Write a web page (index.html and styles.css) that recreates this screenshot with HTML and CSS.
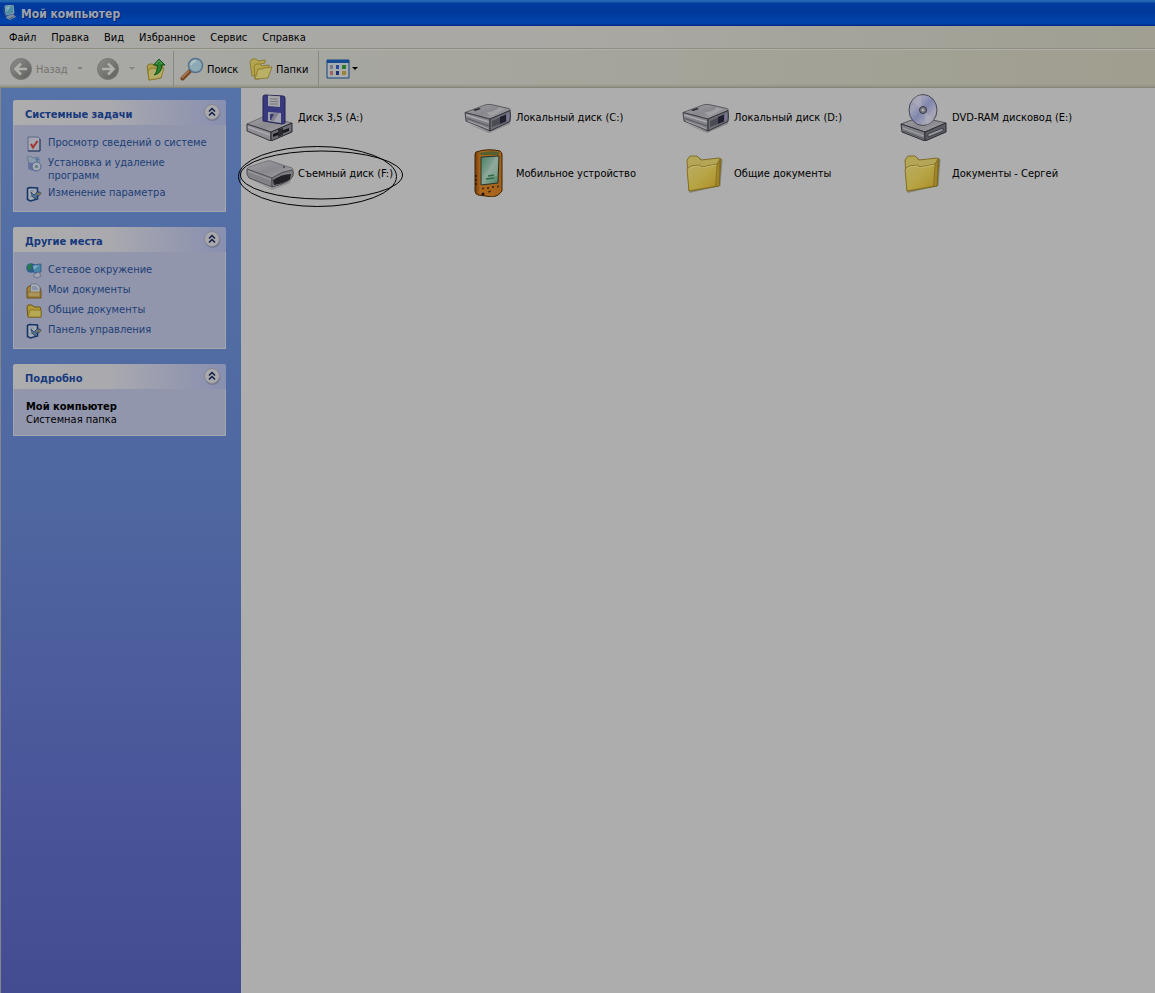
FILE: index.html
```html
<!DOCTYPE html>
<html lang="ru">
<head>
<meta charset="utf-8">
<title>Мой компьютер</title>
<link rel="stylesheet" href="styles.css">
</head>
<body>
<svg class="defs" aria-hidden="true">
  <defs>
    <linearGradient id="gFolder" x1="0" y1="0" x2="1" y2="1"><stop offset="0" stop-color="#b8ad66"/><stop offset=".5" stop-color="#b7a547"/><stop offset="1" stop-color="#ab8a20"/></linearGradient>
    <linearGradient id="gTop" x1="0" y1="0" x2="1" y2="1"><stop offset="0" stop-color="#a0a0a4"/><stop offset=".5" stop-color="#88888e"/><stop offset="1" stop-color="#a5a5a8"/></linearGradient>
    <linearGradient id="gScreen" x1="0" y1="0" x2="1" y2="1"><stop offset="0" stop-color="#4a7f64"/><stop offset=".5" stop-color="#8aa496"/><stop offset="1" stop-color="#4a8060"/></linearGradient>
    <linearGradient id="gPda" x1="0" y1="0" x2="1" y2="0"><stop offset="0" stop-color="#6f3a0c"/><stop offset=".2" stop-color="#b0691d"/><stop offset="1" stop-color="#a4621a"/></linearGradient>
    <linearGradient id="gDisc" x1="0" y1="0" x2="1" y2="1"><stop offset="0" stop-color="#9292a8"/><stop offset=".3" stop-color="#a0a0b8"/><stop offset=".5" stop-color="#8086ae"/><stop offset=".75" stop-color="#a6a6b6"/><stop offset="1" stop-color="#87899c"/></linearGradient>
    <linearGradient id="gBall" x1="0" y1="0" x2="1" y2="1"><stop offset="0" stop-color="#8d8d8a"/><stop offset="1" stop-color="#5f5f5d"/></linearGradient>
    <symbol id="hdd" viewBox="0 0 48 48">
      <path d="M4 31l21 9 21-9v-3L25 38z" fill="#77777a" opacity=".6"/>
      <path d="M1 19.500L21 12q3-1 6-.5l18 4q2 1 1 2L26 26z" fill="url(#gTop)" stroke="#4b4b50" stroke-width=".8"/>
      <path d="M1 19.500L26 26v12L2 28z" fill="#818187" stroke="#3b3b41" stroke-width=".9"/>
      <path d="M2 22l23 7" stroke="#aaaab0" stroke-width="1.400"/><path d="M3 25.500l22 7.500" stroke="#55555d"/>
      <path d="M4 28l20 7.500" stroke="#a0a0a6"/>
      <path d="M26 26l20-8.500q1 5 0 11L26 38z" fill="#6c6c75" stroke="#2b2b32" stroke-width=".9"/>
      <path d="M28 28l8-3.500v6.500l-8 3z" fill="#4b4b54"/><path d="M36 24l6-2.500v7L36 31z" fill="#1f1f30"/><path d="M43 21l2-1v7l-2 1z" fill="#77779a"/>
      <path d="M9 17l6-2 2 1-6 2z" fill="#28282d"/>
      <path d="M22 19q8 1 13-5l6 2-14 7z" fill="#adadb1" opacity=".6"/>
    </symbol>
    <symbol id="folder" viewBox="0 0 48 48">
      <path d="M7 12l2-3 8-1 3 3 19-2 1.500 2-2 26-31 7z" fill="#6f6b55" opacity=".6"/>
      <path d="M5 11l3-4h7l4 4 18-2 2 1-2 27-30 5z" fill="#b4a657" stroke="#756015" stroke-width=".8"/>
      <path d="M5 20l4-3 8-1 3 2 15-3 3-4-3 26L7 42z" fill="url(#gFolder)" stroke="#7d6819" stroke-width=".8"/>
      <path d="M6.500 21l3-3 7-1 3 2 15-3" fill="none" stroke="#c2b973"/>
      <path d="M35 15l3-5-1 27-3.500.5z" fill="#a08529" stroke="#6e5914" stroke-width=".5"/>
    </symbol>
    <symbol id="chev" viewBox="0 0 18 18">
      <circle cx="9.500" cy="10" r="7.800" fill="#6d7085"/>
      <circle cx="9" cy="9" r="7.500" fill="#a8a8ad" stroke="#888894"/>
      <path d="M6 8.500l3-3 3 3M6 12.500l3-3 3 3" fill="none" stroke="#101c42" stroke-width="1.500"/>
    </symbol>
    <symbol id="panelIcon" viewBox="0 0 16 16">
      <path d="M1.500 2.500l2-1 8 .5v11l-7 2-3-1.500z" fill="#a2a9b2" stroke="#173467" stroke-width="1.600"/>
      <path d="M4 5h4M4 11l3-1" stroke="#778aa5"/>
      <path d="M5 6l3 3 3-3h3q2 2 0 3l-3 1-2 3-3-3z" fill="#55708a" stroke="#223d65" stroke-width=".7"/><path d="M11 8h4" stroke="#867644" stroke-width="1.500"/>
    </symbol>
  </defs>
</svg>
<div class="window">
  <header class="titlebar">
    <svg class="i16" viewBox="0 0 16 16"><path d="M3 1l8-1 1 8-8 2z" fill="#4a8da4" stroke="#8aa2ad"/><path d="M4 2l5-1-4 6z" fill="#7fb0bb"/><path d="M5 11l6-2 3 3-6 3-4-2z" fill="#7a8b9e"/><path d="M2 3l2 8-1 1-2-7z" fill="#2c4d80"/><path d="M7 14l5-2" stroke="#415d7c"/></svg>
    <h1>Мой компьютер</h1>
  </header>
  <nav class="menubar">
    <button>Файл</button><button>Правка</button><button>Вид</button><button>Избранное</button><button>Сервис</button><button>Справка</button>
  </nav>
  <div class="toolbar">
    <button class="tool nav-back" disabled>
      <svg class="i24" viewBox="0 0 24 24"><circle cx="12" cy="12" r="10.500" fill="url(#gBall)" stroke="#777774"/><path d="M18 12H7M12 6.500L6.500 12l5.500 5.500" fill="none" stroke="#b1b1ac" stroke-width="2.600"/></svg>
      <span>Назад</span><i class="arrow dim"></i>
    </button>
    <button class="tool nav-fwd" disabled aria-label="Вперед">
      <svg class="i24" viewBox="0 0 24 24"><circle cx="12" cy="12" r="10.500" fill="url(#gBall)" stroke="#777774"/><path d="M6 12h11M12 6.500l5.500 5.500-5.500 5.500" fill="none" stroke="#b1b1ac" stroke-width="2.600"/></svg>
      <i class="arrow dim"></i>
    </button>
    <button class="tool nav-up" aria-label="Вверх">
      <svg class="i24" viewBox="0 0 24 24"><path d="M3 9l2-2h4l2 2 8-1-2 13-12 2z" fill="#aa9c50" stroke="#806b16" stroke-width=".8"/><path d="M4 13l5-2 3 1 8-1-3 10-12 2z" fill="#b3ab68" stroke="#8b741b" stroke-width=".8"/><path d="M10 18q4-3 3-10H9.500L15 2l6 6h-3.500q1 8-7.500 10z" fill="#2b8030" stroke="#0d4c15" stroke-width=".9"/><path d="M12 7l3-3.500L18 7" fill="none" stroke="#5da05c"/></svg>
    </button>
    <span class="sep"></span>
    <button class="tool search">
      <svg class="i24" viewBox="0 0 24 24"><path d="M2.500 21.500L10 14" stroke="#74431f" stroke-width="4" stroke-linecap="round"/><path d="M2 21l7-7" stroke="#b18054" stroke-width="1.500"/><circle cx="15.500" cy="8.500" r="7" fill="#8daab5" stroke="#55728a" stroke-width="1.500"/><path d="M11 8q1-4 5-4" stroke="#b5c2c5" stroke-width="2" fill="none"/></svg>
      <span>Поиск</span>
    </button>
    <button class="tool folders">
      <svg class="i24" viewBox="0 0 24 24"><path d="M1 5l2-3h4l2 2 7-1v3l-9 2 1 10-5 1z" fill="#b3a650" stroke="#86701e" stroke-width=".8"/><path d="M5 9l2-2h4l2 2 7-1v4L10 22H6z" fill="#b5a650" stroke="#86701e" stroke-width=".8"/><path d="M6 22l3-10h4l2-1 8-1-4 11-12 1z" fill="#bab067" stroke="#87711f" stroke-width=".8"/></svg>
      <span>Папки</span>
    </button>
    <span class="sep"></span>
    <button class="tool views" aria-label="Вид">
      <svg class="i24" viewBox="0 0 24 24"><path d="M1 3h22v18H1z" fill="#a9adad" stroke="#124480"/><path d="M1 3h22v3H1z" fill="#144a90"/><path d="M4 8h3v4H4z" fill="#74788d"/><path d="M10 8h3v4h-3z" fill="#264aa0"/><path d="M16 8h4v4h-4z" fill="#287b2c"/><path d="M4 14h3v4H4z" fill="#a0665d"/><path d="M10 14h3v4h-3z" fill="#20306e"/><path d="M16 14h4v4h-4z" fill="#9a8430"/></svg>
      <i class="arrow"></i>
    </button>
  </div>
  <div class="body">
    <aside class="sidebar">
      <section class="panel">
        <div class="head"><h2>Системные задачи</h2><button class="toggle" aria-label="Свернуть"><svg viewBox="0 0 18 18"><use href="#chev"/></svg></button></div>
        <ul>
          <li><svg class="i16" viewBox="0 0 16 16"><path d="M2 1h10l2 2v12H2z" fill="#a5a6b0" stroke="#5d6888"/><path d="M14 3v12H2" fill="none" stroke="#24375d"/><path d="M5 8l2 3.500L11.500 5" fill="none" stroke="#a3312c" stroke-width="2"/></svg><a href="#">Просмотр сведений о системе</a></li>
          <li><svg class="i16" viewBox="0 0 16 16"><path d="M1 1l4-1 2 2 5-1 2 3-2 4-9 1z" fill="#8c9bab" stroke="#6e7a94"/><path d="M2 6l5 1v8l-5-2z" fill="#66749c"/><circle cx="10.500" cy="10.500" r="4.500" fill="#a1a9b5" stroke="#4f6290"/><circle cx="10.500" cy="10.500" r="1.500" fill="#567b77"/><path d="M9 2l4 1-2 3z" fill="#486c9c"/></svg><a href="#">Установка и удаление программ</a></li>
          <li><svg class="i16"><use href="#panelIcon"/></svg><a href="#">Изменение параметра</a></li>
        </ul>
      </section>
      <section class="panel">
        <div class="head"><h2>Другие места</h2><button class="toggle" aria-label="Свернуть"><svg viewBox="0 0 18 18"><use href="#chev"/></svg></button></div>
        <ul>
          <li><svg class="i16" viewBox="0 0 16 16"><circle cx="5" cy="5" r="4.800" fill="#2d5f8b"/><path d="M1 4q2-4 5-3l-1 4-2 3z" fill="#2b7a47"/><path d="M6 2l9-1v8l-7 1z" fill="#4786a8" stroke="#2d4f7d" stroke-width=".7"/><path d="M7 3l6-1-5 5z" fill="#7dabbb"/><path d="M10 10l3-1 2 4-4 2-4-2z" fill="#a1a4b0" stroke="#58617d" stroke-width=".7"/></svg><a href="#">Сетевое окружение</a></li>
          <li><svg class="i16" viewBox="0 0 16 16"><path d="M1 5l2-2h10l2 4v8H1z" fill="#a98834" stroke="#6b4d1b"/><path d="M5 1h6l3 3v6H4z" fill="#a9aeb5" stroke="#5c6882" stroke-width=".7"/><path d="M6 4h5M6 6h6" stroke="#65799c"/><path d="M2 9h12v5H2z" fill="#aa965a" stroke="#816522" stroke-width=".7"/></svg><a href="#">Мои документы</a></li>
          <li><svg class="i16" viewBox="0 0 16 16"><path d="M1 4l1-2h4l2 2h6l1 3v7H2z" fill="#b09b38" stroke="#6b5215"/><path d="M2 14l2-7h11v7z" fill="#b5a954" stroke="#806718" stroke-width=".7"/></svg><a href="#">Общие документы</a></li>
          <li><svg class="i16"><use href="#panelIcon"/></svg><a href="#">Панель управления</a></li>
        </ul>
      </section>
      <section class="panel">
        <div class="head"><h2>Подробно</h2><button class="toggle" aria-label="Свернуть"><svg viewBox="0 0 18 18"><use href="#chev"/></svg></button></div>
        <p><b>Мой компьютер</b><br>Системная папка</p>
      </section>
    </aside>
    <main class="files">
      <div class="item"><svg class="i48" viewBox="0 0 48 48"><path d="M1 31l18-8 27 7-21 9z" fill="url(#gTop)" stroke="#55555b" stroke-width=".7"/><path d="M1 31l24 8v9L1 38z" fill="#8d8d93" stroke="#37373d"/><path d="M2 34l22 8" stroke="#aaaab0" stroke-width="1.500"/><path d="M25 39l21-9v9l-21 9z" fill="#6c6c74" stroke="#28282e"/><path d="M27 41l16-6v3l-16 6z" fill="#17171d"/><path d="M32 36l5-1v7l-5 2z" fill="#28282f"/><path d="M17 4q0-2 2-2l18 1q2 0 2 2v25l-3 1-19-3z" fill="#39397f" stroke="#24244f"/><path d="M22 2.500l12 .7V14l-12-1z" fill="#a6a6a9"/><path d="M24 6h8M24 8.500h8M24 11h8" stroke="#77777d"/><path d="M22 19l13 1v10l-13-2z" fill="#a1a1ae"/><path d="M25 20h8l-5 8h-3z" fill="#818190"/><path d="M24 21h4l-3 6h-1z" fill="#393974"/></svg><span>Диск 3,5 (A:)</span></div>
      <div class="item"><svg class="i48"><use href="#hdd"/></svg><span>Локальный диск (C:)</span></div>
      <div class="item"><svg class="i48"><use href="#hdd"/></svg><span>Локальный диск (D:)</span></div>
      <div class="item"><svg class="i48" viewBox="0 0 48 48"><path d="M1 31l19-7 26 6-21 9z" fill="url(#gTop)" stroke="#55555b"/><path d="M1 31l24 8v9L2 39z" fill="#7d7d84" stroke="#303036"/><path d="M3 35l21 8" stroke="#a4a4a9"/><path d="M3 38l21 8" stroke="#505057"/><path d="M25 39l21-9v9l-21 9z" fill="#5c5c64" stroke="#28282e"/><path d="M28 41l15-6v3l-15 6z" fill="#9a9aa2" stroke="#27272e" stroke-width=".7"/><ellipse cx="23" cy="17" rx="14" ry="15.500" fill="url(#gDisc)" stroke="#484855"/><path d="M22 17L12 8q4-6 9-6zM24 18l10 8q-3 5-8 6z" fill="#b1b1bb" opacity=".5"/><circle cx="23" cy="17" r="3.500" fill="#77777f" stroke="#393943"/><circle cx="23" cy="17" r="1.300" fill="#b1b1b1"/></svg><span>DVD-RAM дисковод (E:)</span></div>
      <div class="item"><svg class="i48" viewBox="0 0 48 48"><path d="M3 29l22 10q15-3 21-11l-2 6-18 7z" fill="#77777a" opacity=".5"/><path d="M1 20q0-1 2-2l18-6q2-.5 4 0l21 7q2 1 1 3L26 30z" fill="url(#gTop)" stroke="#6a6a6e" stroke-width=".8"/><path d="M1 20l25 9v9L3 29q-3-3-2-9z" fill="#828286" stroke="#4b4b50" stroke-width=".9"/><path d="M2 22l23 9" stroke="#a0a0a4"/><path d="M26 29q10-7 20-8 2 1 1 6-4 7-21 11z" fill="#7c7c81" stroke="#444448" stroke-width=".9"/><path d="M27 31q9-6 18-6l-1 5q-5 4-16 6z" fill="#202025"/><circle cx="38" cy="18" r=".8" fill="#111"/></svg><span>Съемный диск (F:)</span>
        <svg class="rings" viewBox="0 0 166 62" aria-hidden="true"><ellipse cx="79.500" cy="30.500" rx="79" ry="30"/><ellipse cx="83.500" cy="29" rx="81" ry="24"/></svg></div>
      <div class="item"><svg class="i48" viewBox="0 0 48 48"><path d="M12 3q12-4 24-1 2 1 2 4v36q-3 5-9 6l-15-2q-3-1-3-4V6q0-2 1-3z" fill="url(#gPda)" stroke="#402506"/><path d="M15 4q10-3 20-1v3H16z" fill="#58602e"/><path d="M17 8l18-1-1 27-17 2z" fill="url(#gScreen)" stroke="#253329"/><path d="M18 28q7-6 13-20h3l-1 19z" fill="#93aca0" opacity=".6"/><path d="M22 30l8-1M24 27l6-1" stroke="#2f6b45" stroke-width="1.500"/><path d="M12 26v2M12 30v2M12 34v2" stroke="#2e1b07" stroke-width="1.600"/><path d="M18 40l2-1M23 39h2M28 38h2M33 38l2-1M24 43l3-1" stroke="#4c321a" stroke-width="1.800"/><circle cx="19" cy="45" r="1.600" fill="#221609"/></svg><span>Мобильное устройство</span></div>
      <div class="item"><svg class="i48"><use href="#folder"/></svg><span>Общие документы</span></div>
      <div class="item"><svg class="i48"><use href="#folder"/></svg><span>Документы - Сергей</span></div>
    </main>
  </div>
</div>
</body>
</html>
```
FILE: styles.css
```css
* { box-sizing: border-box; }
body { margin: 0; font: 11px/13px "DejaVu Sans Condensed", "DejaVu Sans", sans-serif; color: #000; background: #adadad; }
button { border: 0; padding: 0; background: none; font: inherit; color: inherit; }
svg { display: block; flex: none; }
.defs { position: absolute; width: 0; height: 0; }
.i16 { width: 16px; height: 16px; }
.i24 { width: 24px; height: 24px; }
.i48 { width: 48px; height: 48px; }
.window { min-height: 100vh; display: flex; flex-direction: column; }
.titlebar { height: 26px; display: flex; align-items: center; gap: 3px; padding: 0 2px; background: linear-gradient(#2468b0 0, #1d60ac 2px, #033b9e 3px, #00389a 12px, #0142aa 20px, #0142aa 24px, #022c88 25px); }
.titlebar h1 { margin: 0; padding-top: 2px; font: bold 12px/16px "DejaVu Sans Condensed", sans-serif; color: #a0a4ae; text-shadow: 1px 1px #062366; }
.menubar { height: 23px; display: flex; align-items: center; gap: 15px; padding: 0 9px; background: linear-gradient(90deg, #a9a9a7, #a9a8a3 50%, #a09f92); border-bottom: 1px solid #8e8d80; }
.toolbar { height: 39px; display: flex; align-items: center; padding-left: 9px; background: linear-gradient(rgba(130,130,100,0) 34px, #929184), linear-gradient(90deg, #a9a9a7, #a5a59c 50%, #9f9e8f); border-top: 1px solid #b1b0aa; border-bottom: 1px solid #85857a; }
.tool { display: flex; align-items: center; gap: 4px; height: 36px; }
.tool span { padding-top: 1px; }
.tool:disabled { color: #73736e; }
.nav-back { width: 87px; gap: 3px; }
.nav-fwd { width: 48px; gap: 9px; }
.nav-up { width: 29px; }
.sep { width: 1px; height: 36px; background: #8a897d; }
.search { padding-left: 6px; width: 75px; gap: 3px; }
.folders { width: 69px; gap: 3px; }
.views { padding-left: 7px; gap: 2px; }
.arrow { border: 3px solid transparent; border-top-color: #000; border-bottom: 0; }
.arrow.dim { border-top-color: #84847e; }
.nav-back .arrow { margin-left: 6px; }
.body { flex: 1; display: flex; }
.sidebar { width: 241px; flex: none; padding: 12px 15px 12px 12px; border-left: 1px solid #83868e; background: linear-gradient(#5673a9, #4f67a0 45%, #4a579a 75%, #444c91); display: flex; flex-direction: column; gap: 15px; }
.panel { border: 1px solid #a4a6ae; border-top: 0; border-radius: 3px 3px 0 0; background: #9296ad; }
.head { height: 25px; margin: 0 -1px; padding: 0 5px 0 12px; display: flex; align-items: center; justify-content: space-between; border-radius: 3px 3px 0 0; background: linear-gradient(90deg, #adadae, #a9a9ae 45%, #888fb0); }
.head h2 { margin: 0; padding-top: 4px; font: bold 11px/14px "DejaVu Sans Condensed", sans-serif; color: #16387d; }
.toggle { margin-bottom: 2px; }
.toggle svg { width: 18px; height: 18px; }
.panel ul { list-style: none; margin: 0; padding: 11px 12px 9px; display: flex; flex-direction: column; gap: 4px; }
.panel li { display: flex; align-items: flex-start; gap: 6px; }
.panel a { color: #1c3e74; text-decoration: none; }
.panel p { margin: 0; padding: 11px 12px 9px; }
.files { flex: 1; display: grid; grid-template-columns: repeat(auto-fill, 218px); grid-auto-rows: 56px; align-content: start; padding: 1px 0 0 5px; }
.item { position: relative; display: flex; align-items: center; gap: 4px; white-space: nowrap; }
.rings { position: absolute; left: -8px; top: 1px; width: 166px; height: 62px; fill: none; stroke: #000; stroke-width: 1px; }
```
